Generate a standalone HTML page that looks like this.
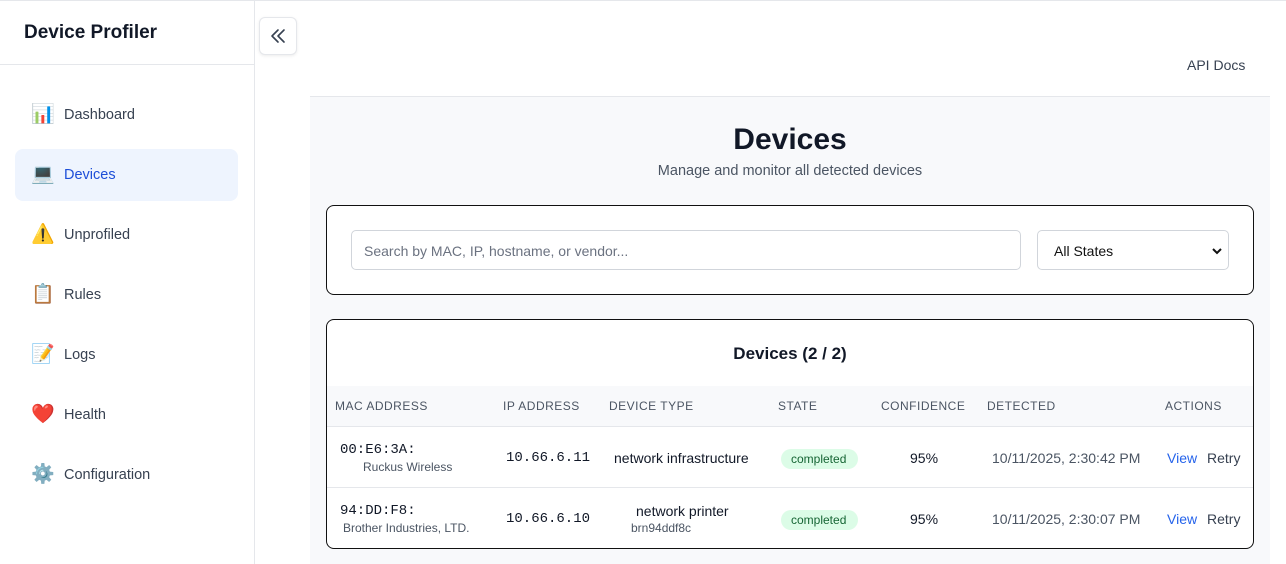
<!DOCTYPE html>
<html><head><meta charset="utf-8"><style>
*{box-sizing:border-box;margin:0;padding:0}
body{width:1286px;height:564px;overflow:hidden;background:#fff;font-family:"Liberation Sans",sans-serif;color:#111827;position:relative}
.a{position:absolute}
.top{left:0;top:0;width:1286px;height:1px;background:#e5e7eb}
.side{left:0;top:1px;width:255px;height:563px;border-right:1px solid #e5e7eb;background:#fff}
.brand{left:24px;top:22px;font-size:19px;font-weight:bold;color:#111827}
.sep{left:0;top:64px;width:254px;height:1px;background:#e5e7eb}
.nav{left:15px;width:223px;height:52px;border-radius:8px;font-size:14.5px;color:#374151}
.nav .ic{position:absolute;left:16px;top:15px;font-size:19px;line-height:22px;width:22px;text-align:center}
.nav .t{position:absolute;left:49px;top:18px}
.act{background:#eef4fe;color:#1d4ed8}
.btn{left:259px;top:17px;width:38px;height:38px;border:1px solid #e5e7eb;border-radius:6px;background:#fff;box-shadow:0 1px 3px rgba(0,0,0,.08)}
.gray{left:310px;top:96px;width:960px;height:468px;background:#f8f9fb;border-top:1px solid #e5e7eb}
.card{background:#fff;border:1px solid #111;border-radius:8px}
.th{font-size:12px;color:#4b5563;letter-spacing:.5px}
.mono{font-family:"Liberation Mono",monospace}
.badge{background:#dcfce7;color:#166534;font-size:12px;border-radius:10px;padding:3px 12px 3px 10px}
</style></head><body>
<div class="a top"></div>
<div class="a side"></div>
<div class="a brand">Device Profiler</div>
<div class="a sep"></div>
<div class="a nav" style="top:89px"><span class="ic">📊</span><span class="t">Dashboard</span></div>
<div class="a nav act" style="top:149px"><span class="ic">💻</span><span class="t">Devices</span></div>
<div class="a nav" style="top:209px"><span class="ic">⚠️</span><span class="t">Unprofiled</span></div>
<div class="a nav" style="top:269px"><span class="ic">📋</span><span class="t">Rules</span></div>
<div class="a nav" style="top:329px"><span class="ic">📝</span><span class="t">Logs</span></div>
<div class="a nav" style="top:389px"><span class="ic">❤️</span><span class="t">Health</span></div>
<div class="a nav" style="top:449px"><span class="ic">⚙️</span><span class="t">Configuration</span></div>
<div class="a btn"><svg width="38" height="38" viewBox="0 0 38 38" style="position:absolute;left:-1px;top:-1px"><path d="M19 13l-6 6 6 6M25 13l-6 6 6 6" fill="none" stroke="#374151" stroke-width="1.6" stroke-linecap="round" stroke-linejoin="round"/></svg></div>
<div class="a" style="left:1187px;top:57px;font-size:14px;color:#374151">API Docs</div>
<div class="a gray"></div>
<div class="a" style="left:310px;top:123px;width:960px;text-align:center;font-size:30px;font-weight:bold">Devices</div>
<div class="a" style="left:310px;top:163px;width:960px;text-align:center;font-size:14.5px;color:#4b5563">Manage and monitor all detected devices</div>
<div class="a card" style="left:326px;top:205px;width:928px;height:90px"></div>
<div class="a" style="left:351px;top:230px;width:670px;height:40px;border:1px solid #d1d5db;border-radius:5px;background:#fff;font-size:14px;color:#6b7280;padding:12px 12px">Search by MAC, IP, hostname, or vendor...</div>
<div class="a" style="left:1037px;top:230px;width:192px;height:40px;border:1px solid #d1d5db;border-radius:5px;background:#fff;font-size:14px;color:#111;padding:12px 16px">All States<svg width="10" height="8" style="position:absolute;right:6px;top:16px"><path d="M1 2l4 4 4-4" fill="none" stroke="#111" stroke-width="2"/></svg></div>
<div class="a card" style="left:326px;top:319px;width:928px;height:230px;overflow:hidden">
 <div class="a" style="left:0;top:24px;width:926px;text-align:center;font-size:17px;font-weight:bold;color:#111827">Devices (2 / 2)</div>
 <div class="a" style="left:0;top:66px;width:926px;height:41px;background:#f8f9fb;border-bottom:1px solid #e5e7eb"></div>
 <div class="a th" style="left:8px;top:79px">MAC ADDRESS</div>
 <div class="a th" style="left:176px;top:79px">IP ADDRESS</div>
 <div class="a th" style="left:282px;top:79px">DEVICE TYPE</div>
 <div class="a th" style="left:451px;top:79px">STATE</div>
 <div class="a th" style="left:554px;top:79px">CONFIDENCE</div>
 <div class="a th" style="left:660px;top:79px">DETECTED</div>
 <div class="a th" style="left:838px;top:79px">ACTIONS</div>
 <div class="a" style="left:0;top:167px;width:926px;height:1px;background:#e5e7eb"></div>
 <div class="a mono" style="left:13px;top:122px;font-size:14px">00:E6:3A:</div>
 <div class="a" style="left:36px;top:140px;font-size:12px;color:#4b5563">Ruckus Wireless</div>
 <div class="a mono" style="left:179px;top:130px;font-size:14px">10.66.6.11</div>
 <div class="a" style="left:287px;top:130px;font-size:14px">network infrastructure</div>
 <div class="a badge" style="left:454px;top:129px">completed</div>
 <div class="a" style="left:583px;top:130px;font-size:14px">95%</div>
 <div class="a" style="left:665px;top:130px;font-size:14px;color:#4b5563">10/11/2025, 2:30:42 PM</div>
 <div class="a" style="left:840px;top:130px;font-size:14px;color:#2563eb">View</div>
 <div class="a" style="left:880px;top:130px;font-size:14px;color:#374151">Retry</div>
 <div class="a mono" style="left:13px;top:183px;font-size:14px">94:DD:F8:</div>
 <div class="a" style="left:16px;top:201px;font-size:12px;color:#4b5563">Brother Industries, LTD.</div>
 <div class="a mono" style="left:179px;top:191px;font-size:14px">10.66.6.10</div>
 <div class="a" style="left:309px;top:183px;font-size:14px">network printer</div>
 <div class="a" style="left:304px;top:201px;font-size:12px;color:#4b5563;width:63px;overflow:hidden;white-space:nowrap">brn94ddf8c</div>
 <div class="a badge" style="left:454px;top:190px">completed</div>
 <div class="a" style="left:583px;top:191px;font-size:14px">95%</div>
 <div class="a" style="left:665px;top:191px;font-size:14px;color:#4b5563">10/11/2025, 2:30:07 PM</div>
 <div class="a" style="left:840px;top:191px;font-size:14px;color:#2563eb">View</div>
 <div class="a" style="left:880px;top:191px;font-size:14px;color:#374151">Retry</div>
</div>
</body></html>
